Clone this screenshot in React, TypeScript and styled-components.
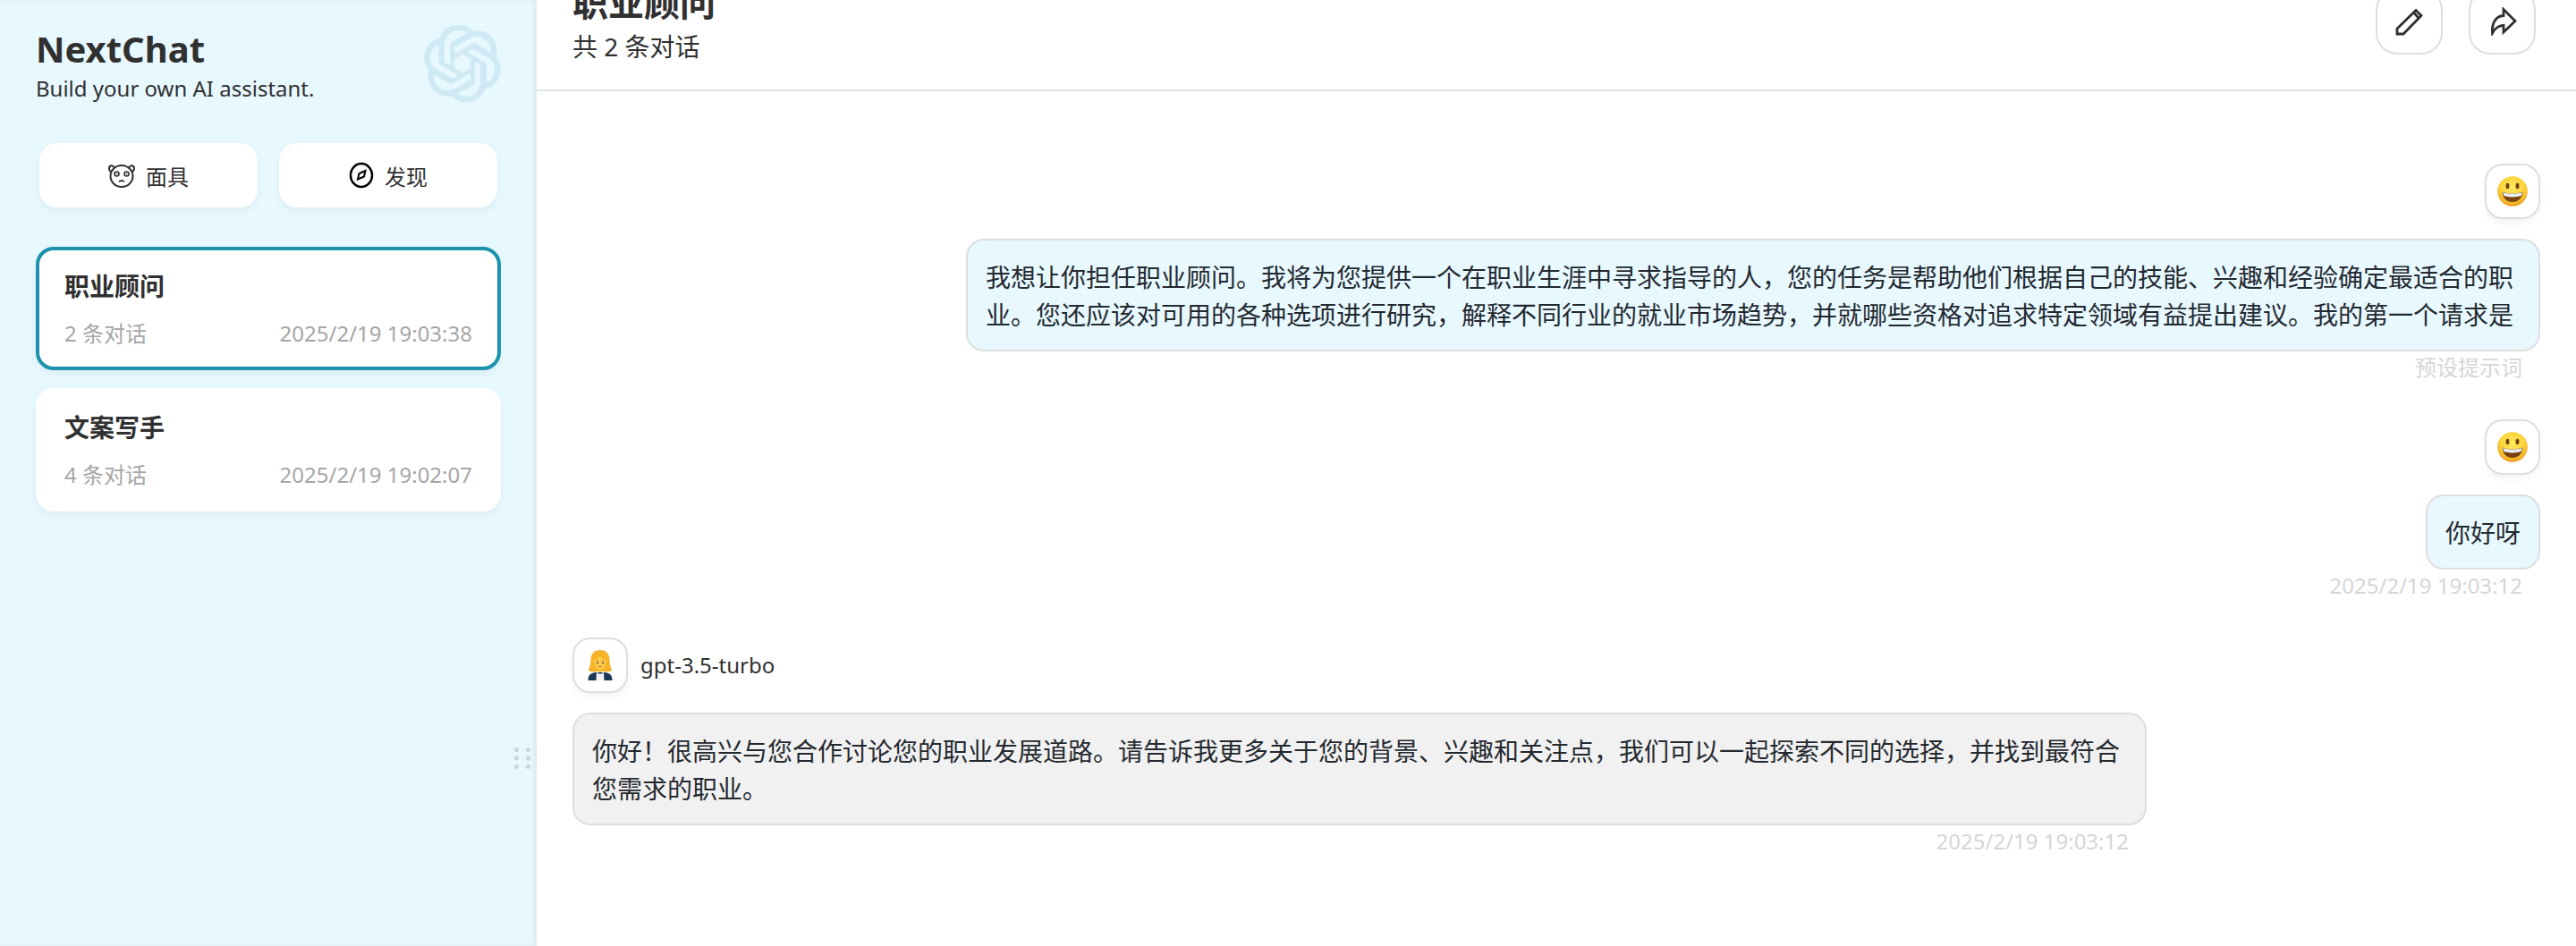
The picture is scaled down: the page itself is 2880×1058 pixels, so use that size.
import React from 'react'
import styled, { createGlobalStyle } from 'styled-components'

const GlobalStyle = createGlobalStyle`
    * {
        box-sizing: border-box;
    }
    html, body {
        margin: 0;
        height: 100%;
        overflow: hidden;
        background: #fff;
        color: #303030;
        font-family: "Noto Sans", "Noto Sans CJK SC", sans-serif;
    }
`

const openAiPath =
    'M22.2819 9.8211a5.9847 5.9847 0 0 0-.5157-4.9108 6.0462 6.0462 0 0 0-6.5098-2.9A6.0651 6.0651 0 0 0 4.9807 4.1818a5.9847 5.9847 0 0 0-3.9977 2.9 6.0462 6.0462 0 0 0 .7427 7.0966 5.98 5.98 0 0 0 .511 4.9107 6.051 6.051 0 0 0 6.5146 2.9001A5.9847 5.9847 0 0 0 13.2599 24a6.0557 6.0557 0 0 0 5.7718-4.2058 5.9894 5.9894 0 0 0 3.9977-2.9001 6.0557 6.0557 0 0 0-.7475-7.0729zm-9.022 12.6081a4.4755 4.4755 0 0 1-2.8764-1.0408l.1419-.0804 4.7783-2.7582a.7948.7948 0 0 0 .3927-.6813v-6.7369l2.02 1.1686a.071.071 0 0 1 .038.052v5.5826a4.504 4.504 0 0 1-4.4945 4.4944zm-9.6607-4.1254a4.4708 4.4708 0 0 1-.5346-3.0137l.142.0852 4.783 2.7582a.7712.7712 0 0 0 .7806 0l5.8428-3.3685v2.3324a.0804.0804 0 0 1-.0332.0615L9.74 19.9502a4.4992 4.4992 0 0 1-6.1408-1.6464zM2.3408 7.8956a4.485 4.485 0 0 1 2.3655-1.9728V11.6a.7664.7664 0 0 0 .3879.6765l5.8144 3.3543-2.0201 1.1685a.0757.0757 0 0 1-.071 0l-4.8303-2.7865A4.504 4.504 0 0 1 2.3408 7.872zm16.5963 3.8558L13.1038 8.364 15.1192 7.2a.0757.0757 0 0 1 .071 0l4.8303 2.7913a4.4944 4.4944 0 0 1-.6765 8.1042v-5.6772a.79.79 0 0 0-.407-.667zm2.0107-3.0231l-.142-.0852-4.7735-2.7818a.7759.7759 0 0 0-.7854 0L9.409 9.2297V6.8974a.0662.0662 0 0 1 .0284-.0615l4.8303-2.7866a4.4992 4.4992 0 0 1 6.6802 4.66zM8.3065 12.863l-2.02-1.1638a.0804.0804 0 0 1-.038-.0567V6.0742a4.4992 4.4992 0 0 1 7.3757-3.4537l-.142.0805L8.704 5.459a.7948.7948 0 0 0-.3927.6813zm1.0976-2.3654l2.602-1.4998 2.6069 1.4998v2.9994l-2.5974 1.4997-2.6067-1.4997Z'

const LogoIcon = () => (
    <LogoSvg viewBox="0 0 24 24">
        <path d={openAiPath} fill="#cfeaf5" stroke="#cfeaf5" strokeWidth="0.3" />
    </LogoSvg>
)

const PandaIcon = () => (
    <svg width="30" height="28" viewBox="0 0 30 28" fill="none" stroke="#303030" strokeWidth="2">
        <path d="M7 5.500C5 2 1 2.500 1 6.500c0 1.600.6 2.700 1.700 3.500" />
        <path d="M23 5.500C25 2 29 2.500 29 6.500c0 1.600-.6 2.700-1.700 3.500" />
        <ellipse cx="15" cy="15" rx="12.500" ry="12" />
        <circle cx="9.500" cy="12.500" r="2.500" strokeWidth="1.600" />
        <circle cx="20.500" cy="12.500" r="2.500" strokeWidth="1.600" />
        <circle cx="9.500" cy="12.500" r="0.700" fill="#303030" strokeWidth="0" />
        <circle cx="20.500" cy="12.500" r="0.700" fill="#303030" strokeWidth="0" />
        <path d="M12 21.200c1-.4 2-1.400 3-1.400s2 1 3 1.400" strokeWidth="1.800" />
    </svg>
)

const CompassIcon = () => (
    <svg width="28" height="30" viewBox="0 0 28 30" fill="none" stroke="#000" strokeWidth="2.500">
        <ellipse cx="14" cy="15" rx="12" ry="13" />
        <path d="M18.500 10 17 16.500 10 19.500 11.500 13Z" strokeWidth="2" />
    </svg>
)

const PencilIcon = () => (
    <svg width="32" height="32" viewBox="0 0 32 32" fill="none" stroke="#303030" strokeWidth="2.800">
        <path d="M2 30v-6L23 3.500l6 6L9 30Z" />
        <path d="M20.500 6l5.500 6" />
    </svg>
)

const ShareIcon = () => (
    <svg width="32" height="32" viewBox="0 0 32 32" fill="none" stroke="#303030" strokeWidth="2.800">
        <path d="M17 2.500 30 15.500 17 28v-7.500c-6 0-9.500 3-12.500 8.500C3.500 17 9 10 17 9.500Z" />
    </svg>
)

const SmileEmoji = () => (
    <svg width="36" height="36" viewBox="0 0 36 36">
        <defs>
            <radialGradient id="smileFace" cx="50%" cy="38%" r="62%">
                <stop offset="0%" stopColor="#ffe95c" />
                <stop offset="65%" stopColor="#fdd33a" />
                <stop offset="100%" stopColor="#ee9a1c" />
            </radialGradient>
        </defs>
        <circle cx="18" cy="18" r="16.800" fill="url(#smileFace)" />
        <ellipse cx="12.500" cy="12" rx="1.900" ry="3.300" fill="#6b3d10" />
        <ellipse cx="23.500" cy="12" rx="1.900" ry="3.300" fill="#6b3d10" />
        <path d="M6.500 18.500c3.500 1.300 7.300 1.900 11.500 1.900s8-.6 11.500-1.900C29 25.800 24.500 30 18 30S7 25.800 6.500 18.500Z" fill="#7a4410" />
        <path d="M7.300 19c3.300 1 6.900 1.600 10.700 1.600s7.400-.6 10.700-1.600c-.1 1.600-.5 3-1.100 4.100-3 .9-6.200 1.300-9.600 1.300s-6.600-.4-9.600-1.300c-.6-1.100-1-2.500-1.100-4.100Z" fill="#e8edf2" />
    </svg>
)

const WomanEmoji = () => (
    <svg width="36" height="36" viewBox="0 0 36 36">
        <path d="M18 1c-6.800 0-10.500 4.700-10.500 10.500 0 5.500-1.200 9-3 12 2.800 1.800 6 2.200 8.500 1.700h10c2.500.5 5.700.1 8.500-1.700-1.800-3-3-6.500-3-12C28.500 5.700 24.800 1 18 1Z" fill="#f5b32a" />
        <path d="M18 8c1.700 2.300 4 3.500 7 4 .2 6-3 11-7 11s-7.200-5-7-11c3-.5 5.300-1.700 7-4Z" fill="#fccb4c" />
        <path d="M13.500 13.200c.8-.5 1.700-.5 2.500 0M20 13.200c.8-.5 1.700-.5 2.500 0" stroke="#a86a1c" strokeWidth="0.800" fill="none" />
        <ellipse cx="14.900" cy="15.300" rx="0.900" ry="1.100" fill="#5c3a12" />
        <ellipse cx="21.100" cy="15.300" rx="0.900" ry="1.100" fill="#5c3a12" />
        <path d="M16.200 19.200c1.200.6 2.400.6 3.600 0" stroke="#a8541f" strokeWidth="0.900" fill="none" />
        <path d="M4.500 35c0-5.500 2.200-8 8-9h11c5.800 1 8 3.500 8 9Z" fill="#1d3558" />
        <path d="M13.500 35l.5-9 4 2 4-2 .5 9Z" fill="#f0f2f5" />
    </svg>
)

const GripIcon = () => (
    <svg width="18" height="24" viewBox="0 0 18 24" fill="#c5d6de">
        {[2.500, 12, 21.500].map(y => (
            <React.Fragment key={y}>
                <circle cx="2.500" cy={y} r="2.500" />
                <circle cx="15.500" cy={y} r="2.500" />
            </React.Fragment>
        ))}
    </svg>
)

const sessions = [
    { title: '职业顾问', count: '2 条对话', date: '2025/2/19 19:03:38', active: true },
    { title: '文案写手', count: '4 条对话', date: '2025/2/19 19:02:07', active: false },
]

const App = () => {
    return (
        <Page>
            <GlobalStyle />
            <Sidebar>
                <Brand>
                    <BrandText>
                        <BrandTitle>NextChat</BrandTitle>
                        <BrandSubtitle>Build your own AI assistant.</BrandSubtitle>
                    </BrandText>
                    <LogoIcon />
                </Brand>
                <ActionRow>
                    <ActionButton>
                        <PandaIcon />
                        面具
                    </ActionButton>
                    <ActionButton>
                        <CompassIcon />
                        发现
                    </ActionButton>
                </ActionRow>
                <SessionList>
                    {sessions.map(session => (
                        <SessionCard key={session.title} $active={session.active}>
                            <SessionTitle>{session.title}</SessionTitle>
                            <SessionMeta>
                                <span>{session.count}</span>
                                <span>{session.date}</span>
                            </SessionMeta>
                        </SessionCard>
                    ))}
                </SessionList>
                <DragHandle>
                    <GripIcon />
                </DragHandle>
            </Sidebar>
            <Main>
                <Header>
                    <HeaderText>
                        <HeaderTitle>职业顾问</HeaderTitle>
                        <HeaderSubtitle>共 2 条对话</HeaderSubtitle>
                    </HeaderText>
                    <HeaderActions>
                        <HeaderButton>
                            <PencilIcon />
                        </HeaderButton>
                        <HeaderButton>
                            <ShareIcon />
                        </HeaderButton>
                    </HeaderActions>
                </Header>
                <Messages>
                    <Message $user>
                        <AvatarRow>
                            <Avatar>
                                <SmileEmoji />
                            </Avatar>
                        </AvatarRow>
                        <BubbleColumn>
                            <Bubble $user>
                                我想让你担任职业顾问。我将为您提供一个在职业生涯中寻求指导的人，您的任务是帮助他们根据自己的技能、兴趣和经验确定最适合的职业。您还应该对可用的各种选项进行研究，解释不同行业的就业市场趋势，并就哪些资格对追求特定领域有益提出建议。我的第一个请求是
                            </Bubble>
                            <MessageDate>预设提示词</MessageDate>
                        </BubbleColumn>
                    </Message>
                    <Message $user>
                        <AvatarRow>
                            <Avatar>
                                <SmileEmoji />
                            </Avatar>
                        </AvatarRow>
                        <BubbleColumn>
                            <Bubble $user>你好呀</Bubble>
                            <MessageDate>2025/2/19 19:03:12</MessageDate>
                        </BubbleColumn>
                    </Message>
                    <Message>
                        <AvatarRow>
                            <Avatar>
                                <WomanEmoji />
                            </Avatar>
                            <ModelName>gpt-3.5-turbo</ModelName>
                        </AvatarRow>
                        <BubbleColumn>
                            <Bubble>
                                你好！很高兴与您合作讨论您的职业发展道路。请告诉我更多关于您的背景、兴趣和关注点，我们可以一起探索不同的选择，并找到最符合您需求的职业。
                            </Bubble>
                            <MessageDate>2025/2/19 19:03:12</MessageDate>
                        </BubbleColumn>
                    </Message>
                </Messages>
            </Main>
        </Page>
    )
}

const Page = styled.div`
    display: flex;
    width: 2880px;
    height: 1058px;
    overflow: hidden;
`

const Sidebar = styled.aside`
    position: relative;
    flex: 0 0 600px;
    padding: 28px 40px 0;
    background: #e7f8ff;
    box-shadow: inset -4px 0 4px 0 rgba(0, 0, 0, 0.05);
`

const Brand = styled.div`
    display: flex;
    justify-content: space-between;
    height: 132px;
`

const BrandText = styled.div`
    display: flex;
    flex-direction: column;
`

const BrandTitle = styled.div`
    font-size: 40px;
    line-height: 54px;
    font-weight: 700;
`

const BrandSubtitle = styled.div`
    font-size: 24px;
    line-height: 34px;
`

const LogoSvg = styled.svg`
    width: 86px;
    height: 86px;
`

const ActionRow = styled.div`
    display: flex;
    gap: 24px;
    padding: 0 4px;
`

const ActionButton = styled.div`
    flex: 1;
    height: 72px;
    display: flex;
    align-items: center;
    justify-content: center;
    gap: 12px;
    border-radius: 20px;
    background: #fff;
    box-shadow: 0 4px 8px 0 rgba(0, 0, 0, 0.05);
    font-size: 24px;
`

const SessionList = styled.div`
    display: flex;
    flex-direction: column;
    gap: 20px;
    margin-top: 44px;
`

const SessionCard = styled.div<{ $active?: boolean }>`
    height: 138px;
    padding: 20px 28px;
    border: 4px solid ${props => (props.$active ? '#1d93ab' : '#fff')};
    border-radius: 20px;
    background: #fff;
    box-shadow: 0 4px 8px 0 rgba(0, 0, 0, 0.05);
`

const SessionTitle = styled.div`
    font-size: 28px;
    line-height: 40px;
    font-weight: 700;
`

const SessionMeta = styled.div`
    display: flex;
    justify-content: space-between;
    margin-top: 16px;
    font-size: 24px;
    line-height: 34px;
    color: #a6a6a6;
`

const DragHandle = styled.div`
    position: absolute;
    top: 836px;
    left: 575px;
    display: flex;
`

const Main = styled.main`
    flex: 1;
    min-width: 0;
    display: flex;
    flex-direction: column;
`

const Header = styled.header`
    flex: 0 0 102px;
    display: flex;
    justify-content: space-between;
    align-items: flex-end;
    padding: 0 45px 0 40px;
    border-bottom: 2px solid #e3e3e3;
    overflow: hidden;
`

const HeaderText = styled.div`
    display: flex;
    flex-direction: column;
    padding-bottom: 27px;
`

const HeaderTitle = styled.div`
    font-size: 40px;
    line-height: 56px;
    font-weight: 700;
`

const HeaderSubtitle = styled.div`
    font-size: 28px;
    line-height: 42px;
`

const HeaderActions = styled.div`
    display: flex;
    gap: 29px;
    padding-bottom: 39px;
`

const HeaderButton = styled.div`
    width: 75px;
    height: 74px;
    display: flex;
    align-items: center;
    justify-content: center;
    border: 2px solid #dedede;
    border-radius: 24px;
    background: #fff;
`

const Messages = styled.div`
    flex: 1;
    padding: 81px 40px 0;
`

const Message = styled.div<{ $user?: boolean }>`
    display: flex;
    flex-direction: column;
    align-items: ${props => (props.$user ? 'flex-end' : 'flex-start')};
    margin-bottom: 40px;
`

const AvatarRow = styled.div`
    display: flex;
    align-items: center;
    gap: 14px;
    margin-bottom: 22px;
`

const Avatar = styled.div`
    width: 62px;
    height: 62px;
    display: flex;
    align-items: center;
    justify-content: center;
    border: 2px solid #dedede;
    border-radius: 20px;
    background: #fff;
    box-shadow: 0 4px 8px 0 rgba(0, 0, 0, 0.05);
`

const ModelName = styled.div`
    font-size: 24px;
    line-height: 34px;
`

const BubbleColumn = styled.div`
    display: flex;
    flex-direction: column;
    max-width: 1760px;
`

const Bubble = styled.div<{ $user?: boolean }>`
    padding: 20px 20px 18px;
    border: 2px solid #dedede;
    border-radius: 20px;
    background: ${props => (props.$user ? '#e7f8ff' : '#f1f1f1')};
    color: #24292f;
    font-size: 28px;
    line-height: 42px;
`

// width 0 + min-width 100%: the date never widens the bubble above it, it spills to the left
const MessageDate = styled.div`
    display: flex;
    justify-content: flex-end;
    width: 0;
    min-width: 100%;
    height: 36px;
    padding-right: 20px;
    font-size: 24px;
    line-height: 36px;
    white-space: nowrap;
    color: #d6d6d6;
`

export default App
